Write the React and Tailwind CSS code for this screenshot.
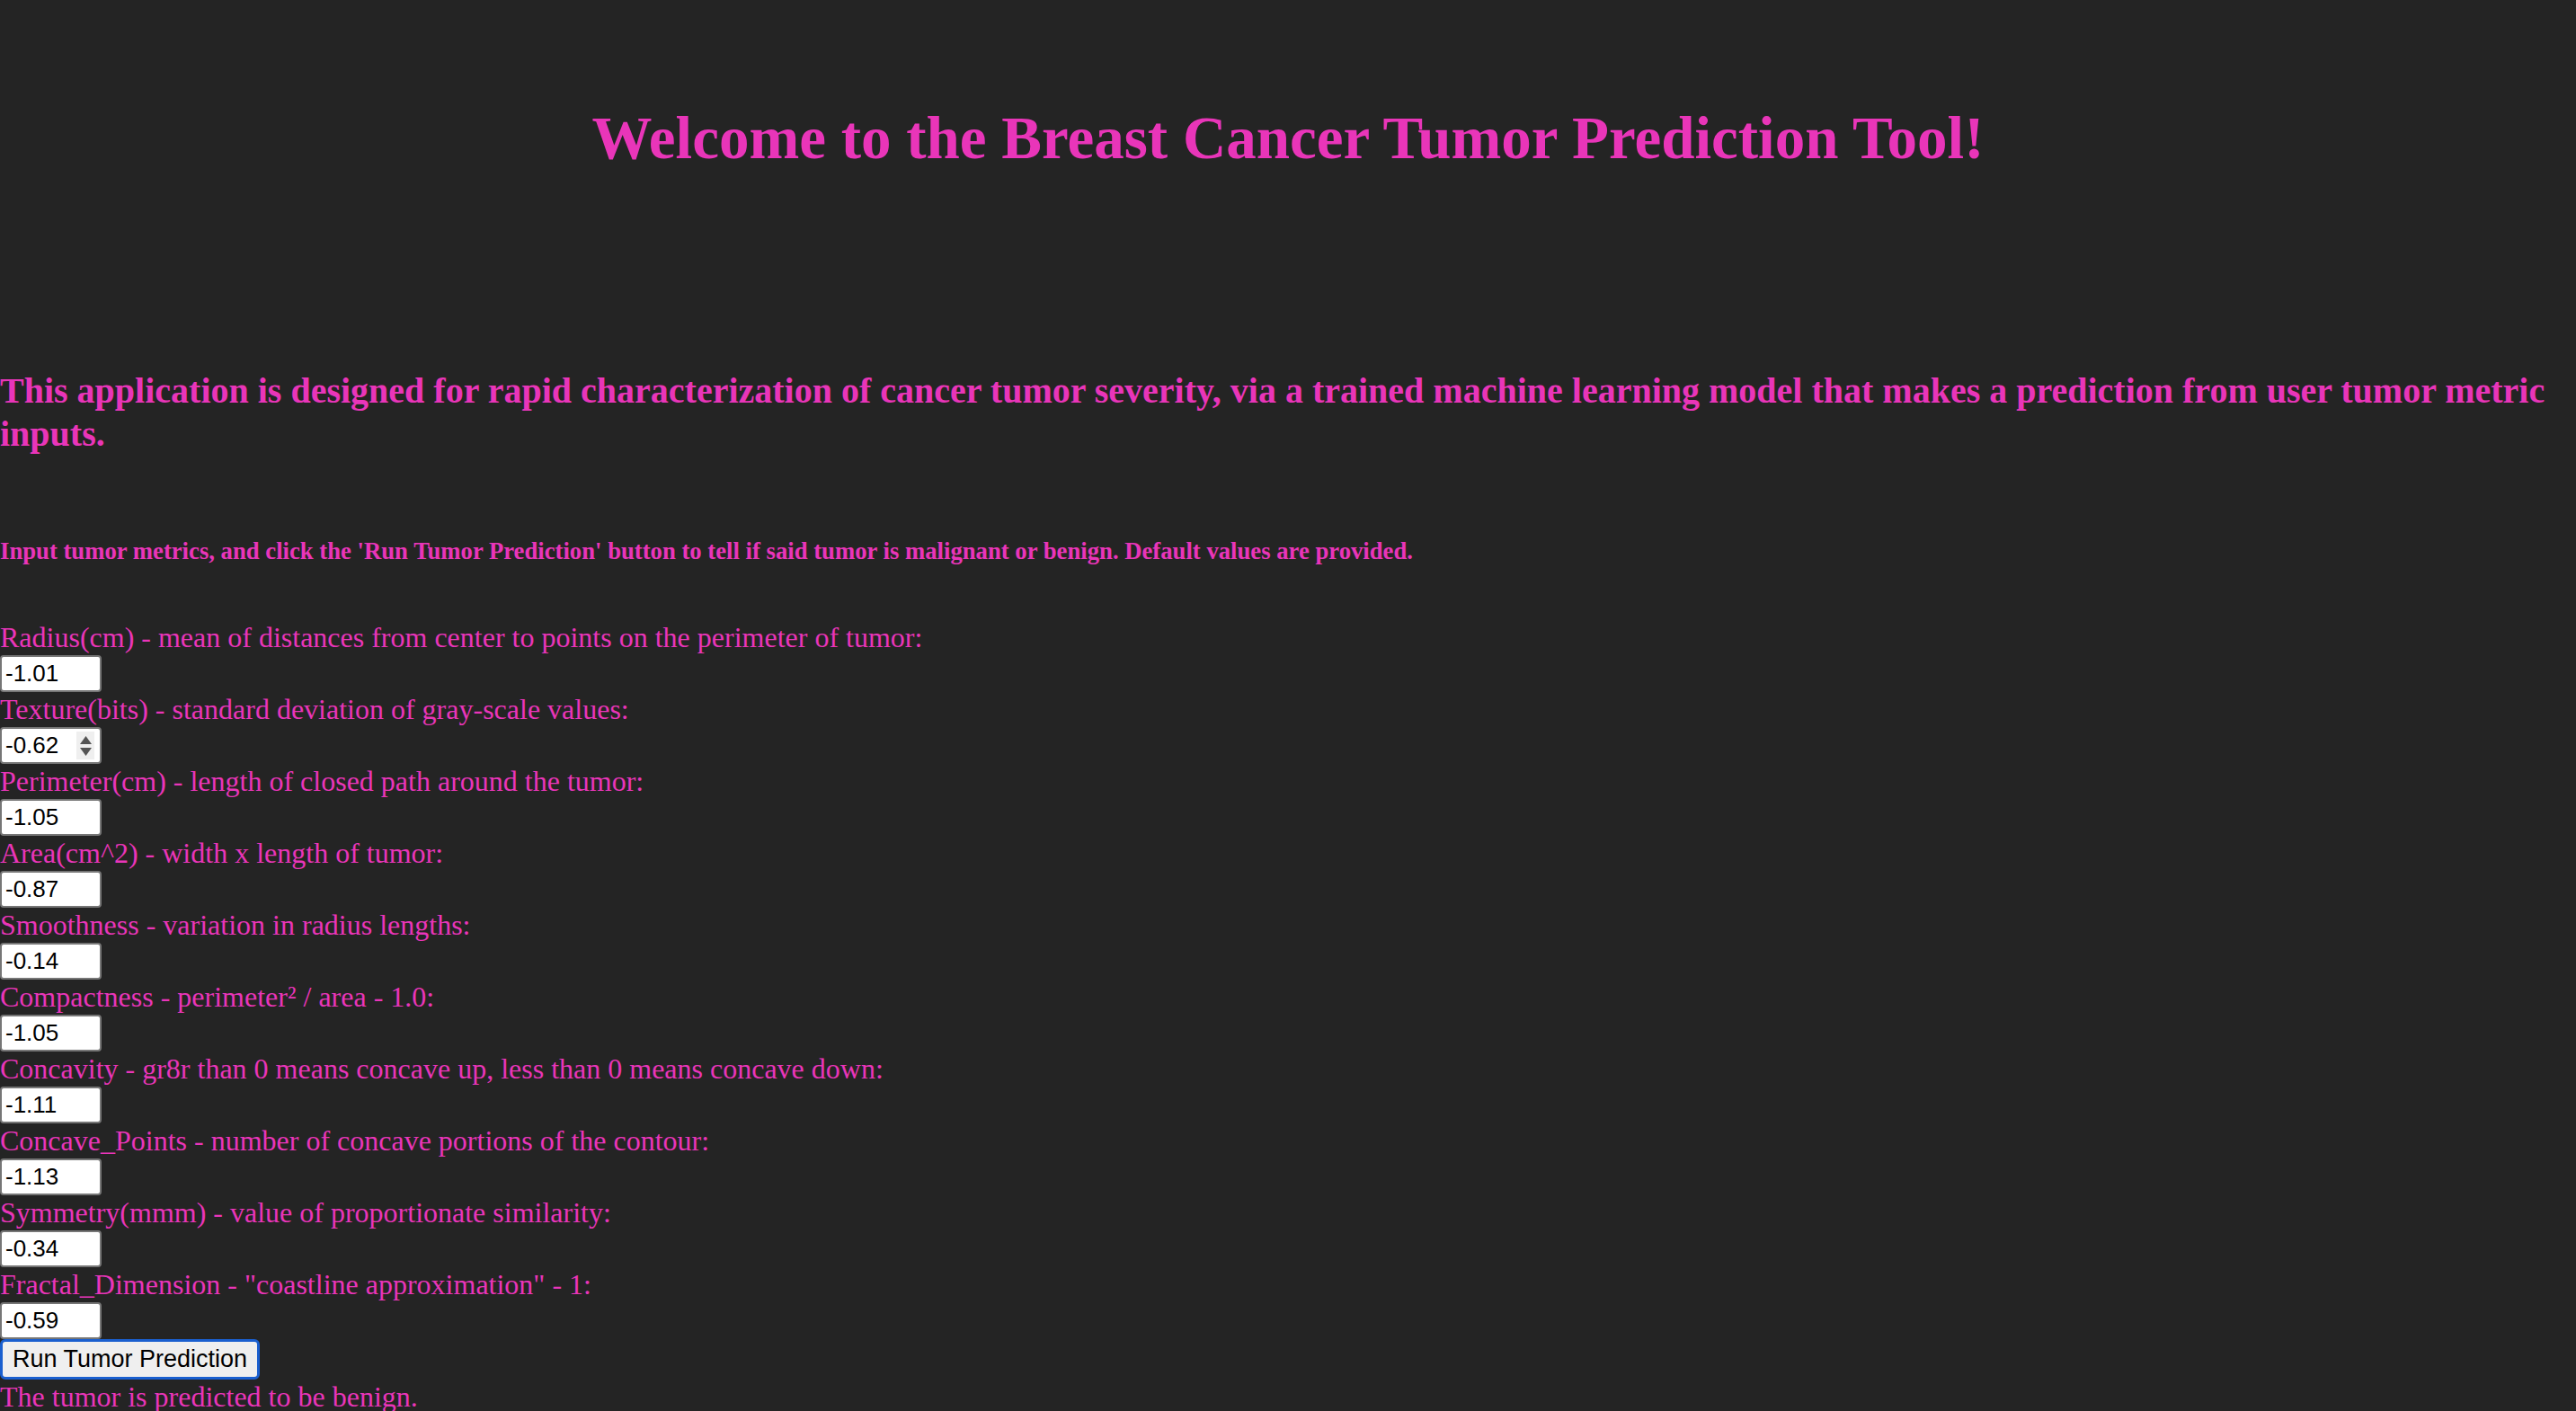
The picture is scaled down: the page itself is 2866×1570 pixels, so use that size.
import React from "react";

const fields = [
  ["Radius(cm) - mean of distances from center to points on the perimeter of tumor:", "-1.01"],
  ["Texture(bits) - standard deviation of gray-scale values:", "-0.62"],
  ["Perimeter(cm) - length of closed path around the tumor:", "-1.05"],
  ["Area(cm^2) - width x length of tumor:", "-0.87"],
  ["Smoothness - variation in radius lengths:", "-0.14"],
  ["Compactness - perimeter² / area - 1.0:", "-1.05"],
  ["Concavity - gr8r than 0 means concave up, less than 0 means concave down:", "-1.11"],
  ["Concave_Points - number of concave portions of the contour:", "-1.13"],
  ["Symmetry(mmm) - value of proportionate similarity:", "-0.34"],
  ["Fractal_Dimension - \"coastline approximation\" - 1:", "-0.59"],
];

export default function App() {
  return (
    <div className="min-h-[1570px] w-full bg-[#242424] text-[#e935b9] font-['Liberation_Serif',serif] overflow-hidden">
      <h1 className="pt-[113px] text-center text-[67px] leading-[80px] font-bold">
        Welcome to the Breast Cancer Tumor Prediction Tool!
      </h1>
      <h2 className="mt-[218px] text-[40px] leading-[48px] font-bold">
        This application is designed for rapid characterization of cancer tumor severity, via a trained machine learning model that makes a prediction from user tumor metric inputs.
      </h2>
      <h5 className="mt-[91px] text-[26.7px] leading-[31px] font-bold">
        Input tumor metrics, and click the 'Run Tumor Prediction' button to tell if said tumor is malignant or benign. Default values are provided.
      </h5>
      <div className="mt-[61px] flex flex-col items-start">
        {fields.map(([label, val], i) => (
          <div key={i} className="flex flex-col items-start">
            <label className="text-[32px] leading-[39px] h-[39px]">{label}</label>
            <div className="relative">
              <input
                type="text"
                readOnly
                value={val}
                className="w-[113px] h-[41px] bg-white border-2 border-[#767676] rounded-[4px] px-[4px] text-black text-[26px] font-['Liberation_Sans',sans-serif] outline-none"
              />
              {i === 1 && (
                <div className="absolute right-[8px] top-[5px] w-[20px] h-[31px] bg-[#efefef] flex flex-col items-center justify-center gap-[4px]">
                  <svg width="13" height="9" viewBox="0 0 13 9"><path d="M6.5 0 L13 9 L0 9 Z" fill="#555" /></svg>
                  <svg width="13" height="9" viewBox="0 0 13 9"><path d="M0 0 L13 0 L6.5 9 Z" fill="#555" /></svg>
                </div>
              )}
            </div>
          </div>
        ))}
        <button className="h-[45px] w-[289px] bg-[#efefef] border-[3px] border-[#1a5fcf] rounded-[6px] text-black text-[27px] font-['Liberation_Sans',sans-serif] leading-none">
          Run Tumor Prediction
        </button>
        <p className="text-[32px] leading-[38px]">The tumor is predicted to be benign.</p>
      </div>
    </div>
  );
}
